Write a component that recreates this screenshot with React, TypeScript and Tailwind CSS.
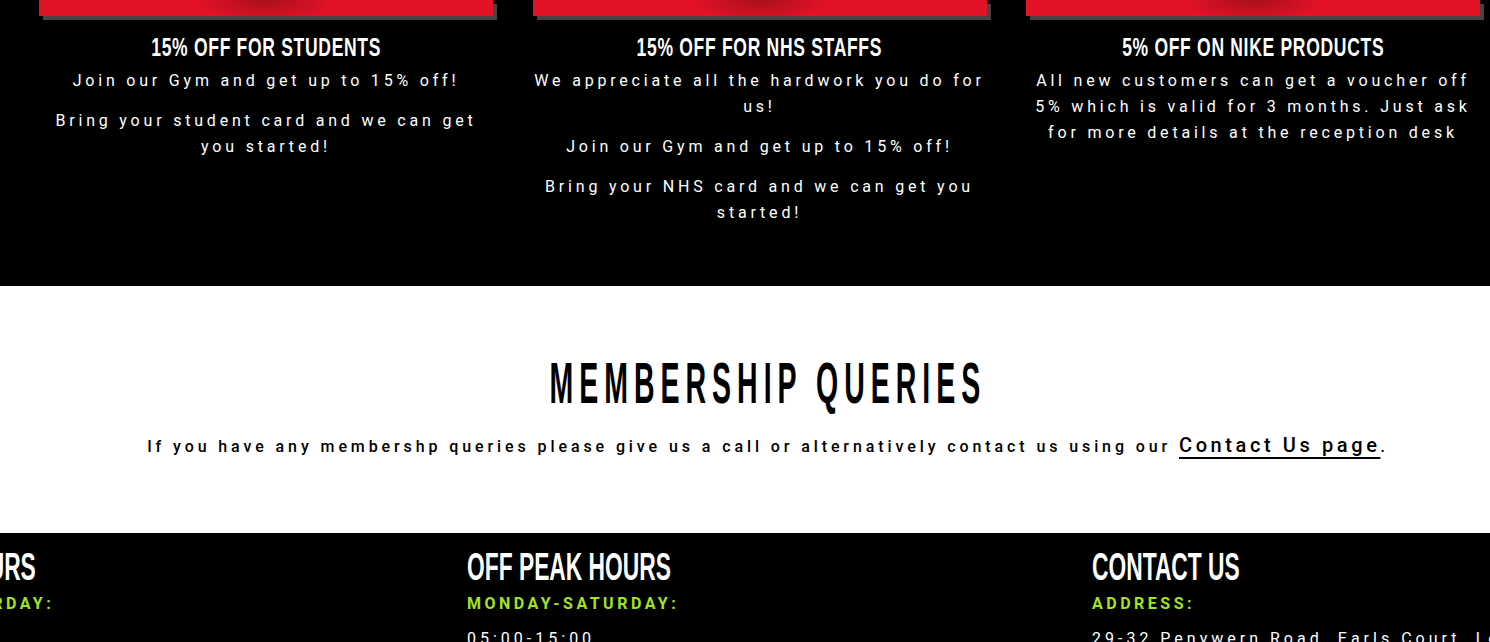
import React, {FC} from 'react';

const offers = [
    {
        title: "15% OFF FOR STUDENTS",
        lines: ["Join our Gym and get up to 15% off!", "Bring your student card and we can get you started!"],
    },
    {
        title: "15% OFF FOR NHS STAFFS",
        lines: ["We appreciate all the hardwork you do for us!", "Join our Gym and get up to 15% off!", "Bring your NHS card and we can get you started!"],
    },
    {
        title: "5% OFF ON NIKE PRODUCTS",
        lines: ["All new customers can get a voucher off 5% which is valid for 3 months. Just ask for more details at the reception desk"],
    },
];

const footer = [
    {title: "OPENING HOURS", label: "MONDAY-SATURDAY:", text: "05:00-23:00"},
    {title: "OFF PEAK HOURS", label: "MONDAY-SATURDAY:", text: "05:00-15:00"},
    {title: "CONTACT US", label: "ADDRESS:", text: "29-32 Penywern Road, Earls Court, London SW5 9SU"},
];

const App: FC = () => {
    return (
        <div className="w-[1490px] overflow-hidden font-['Roboto',sans-serif]">
            {/* offers */}
            <div className="bg-black text-white flex gap-[39.5px] pl-[39px] pr-[10px] pb-[60px]">
                {offers.map((offer) => (
                    <div key={offer.title} className="w-[454px] shrink-0 flex flex-col items-center">
                        <div
                            className="w-full h-[16px] bg-[radial-gradient(ellipse_70px_22px_at_50%_0%,#a80f1c,#e31226)] shadow-[4px_4px_0_#4d4141]"/>
                        <h3 className="mt-[16px] text-[25px] leading-[30px] tracking-[1px] font-bold font-['Liberation_Sans',sans-serif] scale-x-[0.7] whitespace-nowrap">
                            {offer.title}
                        </h3>
                        <div className="mt-[6px] flex flex-col gap-[14px] text-center">
                            {offer.lines.map((line) => (
                                <p key={line} className="text-[16px] leading-[26px] tracking-[3.8px]">{line}</p>
                            ))}
                        </div>
                    </div>
                ))}
            </div>

            {/* membership */}
            <div className="bg-white text-black flex flex-col items-center pl-[46px] pt-[64px] pb-[73px]">
                <h2 className="text-[57px] leading-[67px] font-bold tracking-[12px] font-['Liberation_Sans',sans-serif] scale-x-[0.5] whitespace-nowrap">
                    MEMBERSHIP QUERIES
                </h2>
                <p className="mt-[15px] text-[16px] leading-[26px] tracking-[3.9px] font-medium whitespace-nowrap">
                    If you have any membershp queries please give us a call or alternatively contact us using
                    our <a href="#"
                           className="text-[20px] tracking-[3.6px] underline decoration-2 underline-offset-[5px]">Contact Us page</a>.
                </p>
            </div>

            {/* footer */}
            <div className="bg-black text-white pt-[14px] pb-[20px] overflow-hidden">
                <div className="flex -ml-[158px]">
                    {footer.map((col) => (
                        <div key={col.title} className="w-[625px] shrink-0">
                            <h4 className="text-[38px] leading-[40px] font-bold font-['Liberation_Sans',sans-serif] scale-x-[0.6] origin-left whitespace-nowrap">
                                {col.title}
                            </h4>
                            <p className="mt-[7px] text-[16px] leading-[20px] font-bold tracking-[3.5px] text-[#a2e41e]">
                                {col.label}
                            </p>
                            <p className="mt-[13px] text-[16px] leading-[24px] tracking-[4px] whitespace-nowrap">{col.text}</p>
                        </div>
                    ))}
                </div>
            </div>
        </div>
    );
};

export default App;
